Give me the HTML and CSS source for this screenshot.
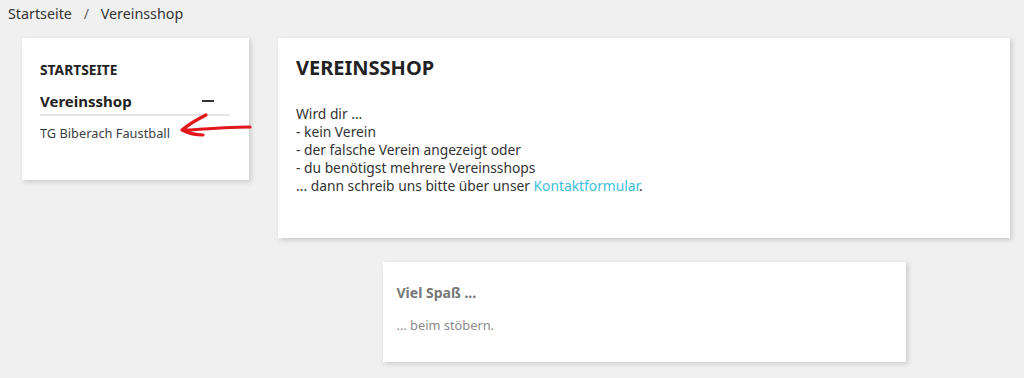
FILE: index.html
```html
<!DOCTYPE html>
<html lang="de">

<head>
    <meta charset="UTF-8" />
    <meta name="viewport" content="width=device-width, initial-scale=1.0" />
    <title>Vereinsshop</title>
    <link rel="stylesheet" href="styles.css">
</head>

<body>
    <nav class="breadcrumb">
        <a href="#">Startseite</a>
        <span class="sep">/</span>
        <span>Vereinsshop</span>
    </nav>

    <div class="layout">
        <aside class="card sidebar">
            <div class="side-title">Startseite</div>
            <div class="side-head">
                <span>Vereinsshop</span>
                <span class="toggle"></span>
            </div>
            <a class="side-link" href="#">TG Biberach Faustball</a>
        </aside>

        <main class="content">
            <section class="card intro">
                <h1>Vereinsshop</h1>
                <p>
                    Wird dir ...<br>
                    - kein Verein<br>
                    - der falsche Verein angezeigt oder<br>
                    - du benötigst mehrere Vereinsshops<br>
                    ... dann schreib uns bitte über unser <a href="#">Kontaktformular</a>.
                </p>
            </section>

            <section class="card fun">
                <h2>Viel Spaß ...</h2>
                <p>... beim stöbern.</p>
            </section>
        </main>
    </div>

    <!-- hand drawn annotation -->
    <svg class="arrow" width="80" height="34" viewBox="0 0 80 34">
        <path d="M72 15 C 58 15, 38 16, 12 18 C 8 18, 5 18, 4 18 C 10 13, 18 8, 28 3 M4 18 C 10 21, 16 23, 25 23"
            fill="none" stroke="#e3171b" stroke-width="3.2" stroke-linecap="round" stroke-linejoin="round" />
    </svg>
</body>

</html>
```

FILE: styles.css
```css
* {
    box-sizing: border-box;
}

html,
body {
    margin: 0;
    padding: 0;
    font-family: 'Noto Sans', 'Open Sans', sans-serif;
    background-color: #f0f0f0;
    color: #333;
}

body {
    position: relative;
    min-height: 378px;
}

a {
    text-decoration: none;
}

.breadcrumb {
    padding: 4px 8px 0;
    height: 38px;
    font-size: 14.3px;
    line-height: 20px;
    color: #333;
}

.breadcrumb a {
    color: #333;
}

.breadcrumb .sep {
    margin: 0 8px;
    color: #666;
}

.layout {
    display: flex;
    align-items: flex-start;
    gap: 29px;
    padding: 0 14px 0 22px;
}

.card {
    background: #fff;
    box-shadow: 2px 2px 5px rgba(0, 0, 0, 0.16);
}

/* Sidebar */
.sidebar {
    width: 227px;
    height: 142px;
    flex-shrink: 0;
    padding: 23px 19px 0 18px;
}

.side-title {
    font-size: 13.8px;
    font-weight: 700;
    text-transform: uppercase;
    line-height: 18px;
    color: #222;
}

.side-head {
    display: flex;
    justify-content: space-between;
    align-items: center;
    margin-top: 12px;
    padding-bottom: 3px;
    border-bottom: 2px solid #e4e4e4;
    font-size: 15px;
    font-weight: 700;
    line-height: 20px;
    color: #222;
}

.toggle {
    width: 12px;
    height: 2px;
    margin-right: 16px;
    background: #333;
}

.side-link {
    display: block;
    margin-top: 8px;
    font-size: 12.8px;
    line-height: 18px;
    color: #3a3f45;
}

/* Main column */
.content {
    flex: 1;
    display: flex;
    flex-direction: column;
    align-items: center;
    gap: 24px;
}

.intro {
    width: 100%;
    height: 200px;
    padding: 15px 18px 0;
}

.intro h1 {
    margin: 0;
    font-size: 20px;
    font-weight: 700;
    text-transform: uppercase;
    line-height: 30px;
    color: #222;
}

.intro p {
    margin: 22px 0 0;
    font-size: 13.8px;
    line-height: 18px;
    color: #333;
}

.intro p a {
    color: #40bfdb;
}

.fun {
    width: 523px;
    height: 100px;
    padding: 21px 14px 0;
}

.fun h2 {
    margin: 0;
    font-size: 14px;
    font-weight: 700;
    line-height: 20px;
    color: #777;
}

.fun p {
    margin: 13px 0 0;
    font-size: 12.8px;
    line-height: 18px;
    color: #8a8a8a;
}

/* annotation over the sidebar */
.arrow {
    position: absolute;
    left: 178px;
    top: 112px;
}
```
